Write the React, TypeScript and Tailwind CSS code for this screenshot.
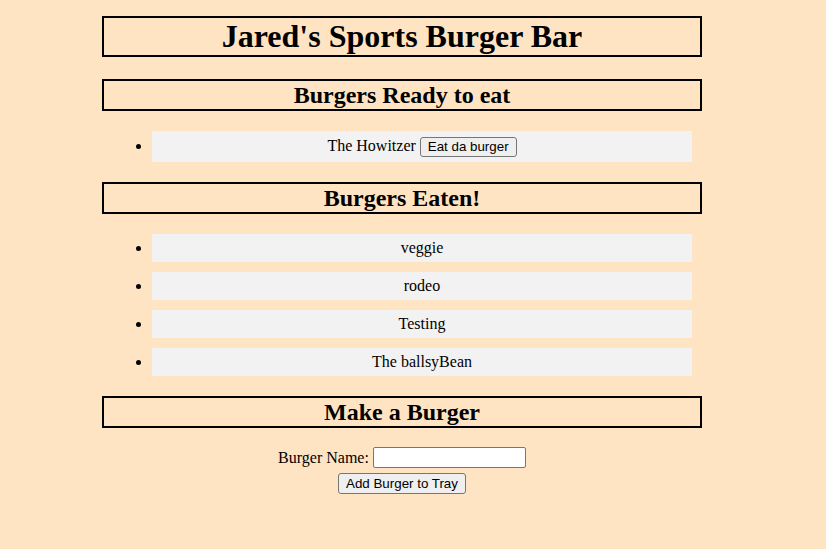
import React from "react";

const eaten = ["veggie", "rodeo", "Testing", "The ballsyBean"];

function Header({ children, className = "" }: { children: React.ReactNode; className?: string }) {
  return (
    <h2
      className={`border-2 border-black text-center text-[24px] leading-[28px] font-bold ${className}`}
    >
      {children}
    </h2>
  );
}

const btn =
  "inline-block border border-[#767676] rounded-[3px] bg-[#efefef] px-[7px] text-[13.33px] text-black font-['Liberation_Sans',Arial,sans-serif]";

export default function App() {
  return (
    <div className="min-h-screen bg-[#ffe4c4] text-black font-['Liberation_Serif','Times_New_Roman',serif]">
      <div className="ml-[102px] w-[600px] pt-[16px] pb-[40px]">
        <h1 className="border-2 border-black text-center text-[32px] leading-[37px] font-bold mb-[22px]">
          Jared's Sports Burger Bar
        </h1>

        <Header className="mb-[20px]">Burgers Ready to eat</Header>
        <ul className="list-disc ml-[50px] w-[540px] mb-[20px] text-[16px]">
          <li className="bg-[#f2f2f2] text-center h-[31px] leading-[29px]">
            The Howitzer{" "}
            <button className={`${btn} h-[20px] leading-[18px] align-baseline`}>Eat da burger</button>
          </li>
        </ul>

        <Header className="mb-[20px]">Burgers Eaten!</Header>
        <ul className="list-disc ml-[50px] w-[540px] mb-[20px] text-[16px] flex flex-col gap-[10px]">
          {eaten.map((b) => (
            <li key={b} className="list-item bg-[#f2f2f2] text-center h-[28px] leading-[28px]">
              {b}
            </li>
          ))}
        </ul>

        <Header>Make a Burger</Header>
        <form className="mt-[19px] flex flex-col items-center text-[16px]" onSubmit={(e) => e.preventDefault()}>
          <div className="flex items-center gap-[4px]">
            <label className="leading-[21px]">Burger Name:</label>
            <input
              type="text"
              className="w-[153px] h-[21px] bg-white border border-[#767676] rounded-[2px] px-[2px] text-[13.33px]"
            />
          </div>
          <button type="submit" className={`${btn} mt-[5px] h-[21px] leading-[19px] px-[6px]`}>
            Add Burger to Tray
          </button>
        </form>
      </div>
    </div>
  );
}
